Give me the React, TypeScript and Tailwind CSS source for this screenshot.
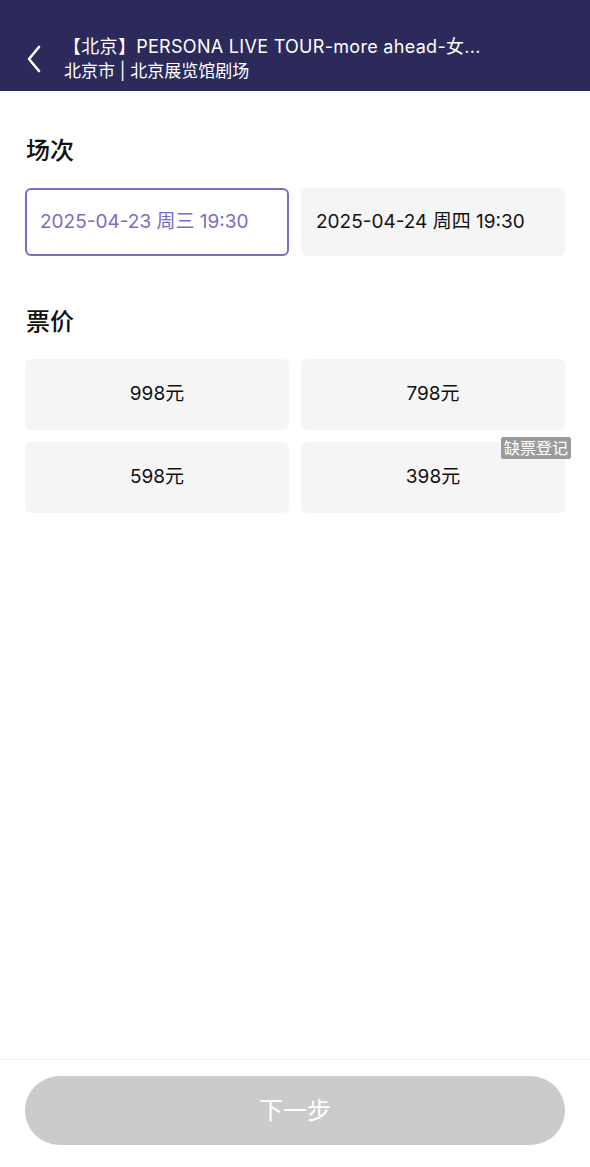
import React from "react";

const sessions = [
  { label: "2025-04-23 周三 19:30", active: true },
  { label: "2025-04-24 周四 19:30", active: false },
];

const prices = [
  { label: "998元" },
  { label: "798元" },
  { label: "598元" },
  { label: "398元", badge: "缺票登记" },
];

const font = {
  fontFamily: '"Inter", "Noto Sans CJK SC", sans-serif',
};

export default function App() {
  return (
    <div className="flex h-[1167px] w-[590px] flex-col bg-white" style={font}>
      <header className="flex h-[91px] items-center bg-[#2b2a5b] pt-[26px]">
        <div className="flex w-[63px] justify-center pl-[5px]">
          <svg width="16" height="28" viewBox="0 0 16 28" fill="none">
            <path d="M13 2 L3 14 L13 26" stroke="white" strokeWidth="2.6" strokeLinecap="round" strokeLinejoin="round" />
          </svg>
        </div>
        <div className="flex flex-col text-white">
          <div className="text-[18px] leading-[25px] tracking-[0.3px]">【北京】PERSONA LIVE TOUR-more ahead-女...</div>
          <div className="pl-[1px] text-[17px] leading-[25px]">北京市 | 北京展览馆剧场</div>
        </div>
      </header>

      <main className="flex-1 px-[25px]">
        <h2 className="mt-[42px] pl-[1px] text-[24px] font-medium leading-[36px] text-[#111]">场次</h2>
        <div className="mt-[19px] grid grid-cols-2 gap-[12px]">
          {sessions.map((s) =>
            s.active ? (
              <div
                key={s.label}
                className="flex h-[68px] items-center rounded-[6px] border-2 border-[#7c6cc8] bg-white pl-[13px] text-[19px] text-[#7a6cc2]"
              >
                {s.label}
              </div>
            ) : (
              <div
                key={s.label}
                className="flex h-[68px] items-center rounded-[6px] bg-[#f5f5f5] pl-[15px] text-[19px] text-[#111]"
              >
                {s.label}
              </div>
            )
          )}
        </div>

        <h2 className="mt-[48px] pl-[1px] text-[24px] font-medium leading-[36px] text-[#111]">票价</h2>
        <div className="mt-[19px] grid grid-cols-2 gap-[12px]">
          {prices.map((p) => (
            <div
              key={p.label}
              className="relative flex h-[71px] items-center justify-center rounded-[6px] bg-[#f5f5f5] text-[19px] text-[#111]"
            >
              {p.label}
              {p.badge && (
                <span className="absolute right-[-6px] top-[-5px] rounded-[2px] bg-[#9c9c9c] px-[3px] text-[16px] leading-[22px] text-white">
                  {p.badge}
                </span>
              )}
            </div>
          ))}
        </div>
      </main>

      <footer className="border-t border-[#f2f2f2] px-[25px] pb-[22px] pt-[16px]">
        <button className="flex h-[69px] w-full items-center justify-center rounded-full bg-[#cbcbcb] text-[24px] text-white">
          下一步
        </button>
      </footer>
    </div>
  );
}
